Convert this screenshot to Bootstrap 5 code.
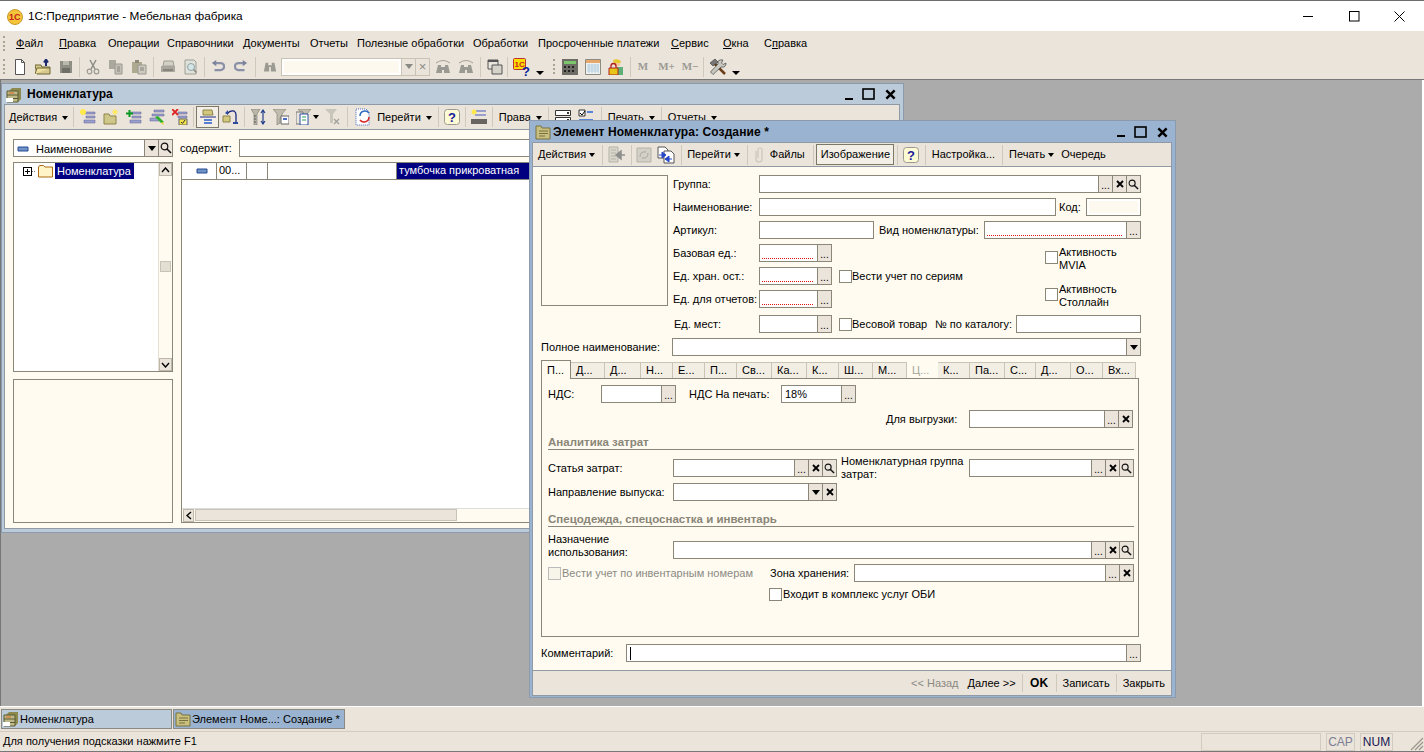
<!doctype html>
<html lang="ru"><head><meta charset="utf-8"><title>1C</title>
<link href="https://cdn.jsdelivr.net/npm/bootstrap@5.3.0/dist/css/bootstrap.min.css" rel="stylesheet">
<style>
html,body{height:752px;overflow:hidden}
body{font:11px/13px "Liberation Sans",Arial,sans-serif;color:#000;background:#ababab}
.root{height:752px;width:1424px}
.ttl{height:31px;background:#fff;border-top:1px solid #6d6d6d;font-size:11.8px;padding:1px 0 0 7px}
.ttl>svg{margin-right:5px}
.wb{width:45.5px;height:30px}
.wbs{margin-right:1.5px}
.mbar{height:23px;background:#ebe4da;padding:2px 0 0 3px}
.gr{width:2px;height:15px;border-left:2px dotted #a9a394;flex-shrink:0}
.mgr{margin-right:11px}
.tbar{height:26px;background:#ebe4da;padding-left:3px;border-bottom:1px solid #777}
.tgr{margin-right:3px}
.tgr2{margin:0 3px 0 7px}
.desk{flex:1;background:#ababab;position:relative;overflow:hidden;border-left:1px solid #777;border-right:2px solid #fff}
.win{position:absolute;border:1px solid #8b9aac;display:flex;flex-direction:column}
.win1{left:0;top:3px;width:903px;height:450px;background:#bccbda}
.win2{left:528px;top:40px;width:647px;height:578px;background:#9ab3d0}
.wh{height:20px;padding:1px 2px 0 4px;font-weight:700;font-size:12px}
.win2 .wh{height:21px;padding-left:5px;letter-spacing:.1px}
.wh>svg:first-child{margin-right:5px}
.win2 .wh>svg:first-child{margin-right:2px}
.wctl{margin-left:auto;margin-right:1px}
.wctl svg{display:block}
.g5{margin-right:5px}.g6{margin-right:6px}
.wbody{flex:1;margin:0 3px 3px 2px;border:1px solid #8f9aa6;background:#fffbf0;display:flex;flex-direction:column;min-height:0}
.win2 .wbody{margin:0 3px 1px 2px}
.itb{height:25px;background:#ebe4da;border-bottom:1px solid #8f9aa6;padding-left:1px;flex-shrink:0;white-space:nowrap;overflow:hidden}
.itb2{height:24px;padding-left:2px}
.tbi{width:23px;height:22px;display:flex;align-items:center;justify-content:center;flex-shrink:0}
.s16{width:16px}.s18{width:18px}.s20{width:20px}.s21{width:21px}.s22{width:22px}.s26{width:26px}
.s25{width:25px;justify-content:flex-end;padding-right:3px}
.tbs{height:20px;width:1px;background:#cfc9bc;margin:0 3px;flex-shrink:0}
.tn{margin:0 2px}
.tbar .tbs{margin:0 1px 0 2px}
.tbar .ta{margin:0 2px 0 3px}
.tbar .tb{margin:0 2px 0 1px}
.tbt{padding:0 3px;flex-shrink:0}
.tl2{padding-left:2px}
.tr5{padding-right:5px}
.tr4{padding-right:4px}
.tneg{margin-left:-3px}
.act{border:1px solid #7c7868;height:22px;background:#f3efe7}
.izo{width:78px;margin-left:-1px;padding:0 0 0 4px;height:21px}
.caret-d{display:inline-block;border:3px solid transparent;border-top:4px solid #000;border-bottom:0;margin:0 1px 0 3px;vertical-align:middle}
.win1 .caret-d{margin:0 0 0 5px}
.win1 .cfl{margin:0 3px 0 -2px;flex-shrink:0}
.dis{color:#8a8a84}
.inp,.fb{height:18px;border:1px solid #8a8678;background:#fff}
.inp{flex:1;min-width:0;padding:2px 3px 0;line-height:13px;white-space:nowrap;overflow:hidden}
.req{background:repeating-linear-gradient(90deg,#d11 0 1px,#fff 1px 2px) 2px 13px/calc(100% - 6px) 1px no-repeat #fff}
.fb{width:15px;margin-left:-1px;background:#ebe4da;display:flex;align-items:center;justify-content:center;flex-shrink:0;font-size:10px;line-height:10px}
.fld{display:flex;height:18px;flex-shrink:0}
.dots{position:relative;top:2px}
.caret-b{border:4px solid transparent;border-top:5px solid #000;border-bottom:0;display:block}
.caret-g{border:4px solid transparent;border-top:5px solid #8a8a84;border-bottom:0;display:block}
.combo{width:149px}
.combo .inp{background:#fdf9ee;box-shadow:inset 0 0 0 2px #fff;border-color:#c8c3b5}
.combo .fb{border-color:#c8c3b5;font-size:13px;color:#8a8a84}
.kod{background:#fdf9ee;box-shadow:inset 0 0 0 2px #fff}
.arw{width:13px;height:22px;display:flex;align-items:flex-end;justify-content:center;padding-bottom:3px;flex-shrink:0}
.arw::before{content:"";border:4px solid transparent;border-top:4px solid #000;border-bottom:0}
.mm{font:700 11px/13px "Liberation Serif",serif;color:#9a9a94;text-align:center;flex-shrink:0}
.m1{width:20px}.m2{width:27px}
.rw{display:flex;align-items:center;height:18px;flex-shrink:0}
.rw>span{flex-shrink:0}
.nw{white-space:nowrap}
.mb5x{margin-bottom:5px}.mb7x{margin-bottom:7px}
.chk{width:13px;height:13px;border:1px solid #8a8678;background:#fff;flex-shrink:0}
.chk.off{background:#f7f4ea;border-color:#bbb}
.pic{width:127px;height:131px;border:1px solid #8a8678;margin-right:5px;flex-shrink:0}
.w14{width:14px}.w21{width:21px}.w27{width:27px}.w30{width:30px}.w31{width:31px}.w32{width:32px}.w33{width:33px}.w34{width:34px}.w35{width:35px}.w36{width:36px}.w41{width:41px}.w43{width:43px}.w47{width:47px}.w49{width:49px}.w52{width:52px}.w53{width:53px}.w55{width:55px}.w59{width:59px}.w65{width:65px}.w67{width:67px}.w73{width:73px}.w75{width:75px}.w76{width:76px}.w81{width:81px}.w83{width:83px}.w84{width:84px}.w85{width:85px}.w86{width:86px}.w92{width:92px}.w96{width:96px}.w105{width:105px}.w115{width:115px}.w116{width:116px}.w125{width:125px}.w128{width:128px}.w129{width:129px}.w131{width:131px}.w133{width:133px}.w157{width:157px}.w160{width:160px}.w164{width:164px}.w165{width:165px}.w208{width:208px}.w221{width:221px}.w280{width:280px}.w297{width:297px}.w372{width:372px}.w382{width:382px}.w461{width:461px}.w469{width:469px}.w515{width:515px}
.ms1x{margin-left:1px}.ms2x{margin-left:2px}.ms3x{margin-left:3px}.ms4x{margin-left:4px}.ms5x{margin-left:5px}.ms7x{margin-left:7px}.ms8x{margin-left:8px}.ms13x{margin-left:13px}
.mt3x{margin-top:3px}.mt5x{margin-top:5px}.mt6x{margin-top:6px}.mt7x{margin-top:7px}.mt9x{margin-top:9px}.mt14x{margin-top:14px}
.pe1x{padding-right:1px}
.fpad{padding:8px 8px 0 8px;flex:1;min-height:0;display:flex;flex-direction:column}
.ftop{display:flex;margin-bottom:5px}
.fcol{width:468px}
.racts{padding-top:2px}
.act2{height:37px}
.act3{height:25px}
.chkit{display:flex;align-items:flex-start}
.chkit .chk{margin:5px 1px 0 0}
.tabs1c{height:18px;margin-top:4px;border:0;flex-wrap:nowrap;gap:0;position:relative;z-index:1;align-items:flex-start;flex-shrink:0}
.tabs1c .nav-link{font-size:11px;line-height:13px;padding:1px 0 0 5px;height:16px;margin:2px 0 0;color:#000;background:#f3eee4;border:1px solid #c9c4b6;border-width:1px 1px 0 0;border-radius:0;white-space:nowrap;overflow:hidden}
.tabs1c .nav-link.active{background:#fffbf0;height:19px;margin-top:0;padding:3px 0 0 5px;border:1px solid #8a8678;border-bottom:0}
.tabs1c .nav-link.disabled{color:#a4a49c}
.tabbody{width:598px;height:259px;border:1px solid #8a8678;padding:6px 4px 0 6px;flex-shrink:0}
.hd{font-weight:700;color:#8a8678;border-bottom:1px solid #8a8678;height:15px;line-height:14px;font-size:11.5px}
.hd1{margin-top:7px}.hd2{margin-top:11px}
.up{align-self:flex-end}
.crt{display:inline-block;width:1px;height:13px;background:#000}
.wfoot{height:25px;background:#ebe4da;border-top:1px solid #8f9aa6;flex-shrink:0;padding-right:6px}
.fs{width:1px;height:18px;background:#cfc9bc;margin:0 6px}
.nz{margin-right:9px}
.ok{font-weight:700;font-size:12px;margin:0 1.5px}
.filt{padding:9px 0 0 8px}
.bx{height:18px;border:1px solid #8a8678;background:#fff}
.ft{margin-left:7px}
.px8{padding-left:8px}
.lpane{width:160px;flex-shrink:0}
.tree{height:210px;border:1px solid #8a8678;background:#fff;position:relative;display:flex}
.treeb{height:16px}
.tpm{margin:0 1px 0 9px}
.sel1{background:#000080;color:#fff}
.tsel{padding:1px 3px 1px 2px;height:16px;margin-left:2px;line-height:14px}
.sbv{width:14px;border-left:1px solid #e4dfd3;background:#fffbf0;display:flex;flex-direction:column;justify-content:space-between;position:relative}
.sbb{height:13px;background:#ebe4da;border:1px solid #bdb8aa;display:flex;align-items:center;justify-content:center;flex-shrink:0}
.hbtn{width:11px;margin-left:1px}
.thumb{position:absolute;left:1px;top:98px;width:11px;height:11px;background:#e4dfd3;border:1px solid #c8c3b5}
.lower{height:144px;border:1px solid #8a8678;background:#fffbf0;margin-top:7px}
.grid{flex:1;border:1px solid #8a8678;background:#fff;margin-left:8px;display:flex;flex-direction:column;height:361px}
.grow{height:17px;border-bottom:1px solid #8a8678;display:flex}
.gc{border-right:1px solid #8a8678;height:16px;padding:1px 0 0 2px;flex-shrink:0;white-space:nowrap}
.gsel{flex:1;border:0}
.gspace{flex:1}
.hsb{height:14px;background:#fffbf0;border-top:1px solid #ddd;display:flex;padding:0}
.hthumb{width:262px;height:12px;background:#ebe4da;border:1px solid #c8c3b5;margin-left:1px}
.tasks{height:25px;background:#ebe4da;border-top:1px solid #fff;padding:2px 0 0 1px;flex-shrink:0}
.tk{height:20px;padding:0 0 0 1px;border:1px solid #8a8a84;display:flex;align-items:center;flex-shrink:0}
.tk1{width:171px;background:#bccbda}
.tk2{width:172px;background:#9ab3d0;margin-left:1px}
.stat{height:21px;background:#ebe4da;border-top:1px solid #d2ccc0;border-bottom:1px solid #777;padding:0 0 0 3px;flex-shrink:0}
.sbx{height:18px;border:1px solid #d2ccc0;text-align:center;line-height:16px;font-size:12px;flex-shrink:0}
.sb0{width:120px}.sb1{width:29px;color:#7b7f96;margin-left:5px}.sb2{width:33px;margin:0 17px 0 5px;color:#141450}
.grip{align-self:flex-end}
</style></head><body>
<svg width="0" height="0" class="d-none"><defs>
<symbol id="i-new" viewBox="0 0 16 16"><path d="M3.500.5h6l3 3v12h-9z" fill="#fff" stroke="#555"/><path d="M9.500.5v3h3" fill="none" stroke="#555"/></symbol>
<symbol id="i-open" viewBox="0 0 16 16"><path d="M0 6h6l1 2h8v7H2z" fill="#d7c98d" stroke="#6e6433"/><path d="M0 15l2-6h13" fill="#eee0a0" stroke="#6e6433"/><path d="M11 7V2M9 3.500l2-3 2 3" fill="none" stroke="#1c2a6e" stroke-width="2"/></symbol>
<symbol id="i-save" viewBox="0 0 16 16"><path d="M2 2h12v12H2z" fill="#8f8f86"/><path d="M5 2h6v4H5z" fill="#b9b9ae"/><path d="M4 9h8v5H4z" fill="#6f6f68"/></symbol>
<symbol id="i-cut" viewBox="0 0 16 16"><path d="M5 1l5 9M11 1l-5 9" stroke="#8c8c86" stroke-width="1.500" fill="none"/><circle cx="4.500" cy="12.500" r="2.300" fill="none" stroke="#9a9a94" stroke-width="1.200"/><circle cx="11.500" cy="12.500" r="2.300" fill="none" stroke="#9a9a94" stroke-width="1.200"/></symbol>
<symbol id="i-copy" viewBox="0 0 16 16"><path d="M1 1h7v9H1z" fill="#aaa89e"/><path d="M7 5h7v10H7z" fill="#c4c2b8" stroke="#9a988e"/><path d="M9 8h3M9 10h3M9 12h3" stroke="#84827a"/></symbol>
<symbol id="i-paste" viewBox="0 0 16 16"><path d="M1 3h10v11H1z" fill="#aeaa92"/><path d="M4 1h4v3H4z" fill="#8d8a78"/><path d="M7 6h8v9H7z" fill="#cdcbc1" stroke="#9a988e"/><path d="M9 9h4M9 11h4" stroke="#84827a"/></symbol>
<symbol id="i-print" viewBox="0 0 16 16"><path d="M4 2h9l1 5H3z" fill="#d3d1c7" stroke="#a09e94"/><path d="M1 7h14v6H1z" fill="#a9a79d"/><path d="M3 10h10v2H3z" fill="#86847b"/></symbol>
<symbol id="i-prev" viewBox="0 0 16 16"><path d="M2 1h9l2 2v12H2z" fill="#dfe3dc" stroke="#a09e94"/><circle cx="8" cy="8" r="3.500" fill="#d5e6e6" stroke="#94a2a2"/><path d="M10.500 10.500l3 3" stroke="#8a8a82" stroke-width="1.500"/></symbol>
<symbol id="i-undo" viewBox="0 0 16 16"><path d="M5 3.500H11a3.500 3.500 0 0 1 0 8H4" fill="none" stroke="#8a90a8" stroke-width="2.500"/><path d="M1 3.500L6 0v7z" fill="#7d839c"/></symbol>
<symbol id="i-redo" viewBox="0 0 16 16"><path d="M11 3.500H5a3.500 3.500 0 0 0 0 8h7" fill="none" stroke="#8a90a8" stroke-width="2.500"/><path d="M15 3.500L10 0v7z" fill="#7d839c"/></symbol>
<symbol id="i-bin" viewBox="0 0 16 16"><path d="M3 3h3v3h4V3h3l2 10H9V8H7v5H1z" fill="#9a9a92"/></symbol>
<symbol id="i-bin2" viewBox="0 0 16 16"><path d="M3 6h3v2h4V6h3l2 8H9v-3H7v3H1z" fill="#9a9a92"/><path d="M1 4q7-5 14 0" fill="none" stroke="#a0a09a"/></symbol>
<symbol id="i-wins" viewBox="0 0 16 16"><path d="M1 1h10v9H1z" fill="#e8e6dc" stroke="#555"/><path d="M1 1h10v2H1z" fill="#555"/><path d="M5 6h10v9H5z" fill="#d5d3c9" stroke="#555"/></symbol>
<symbol id="i-1c" viewBox="0 0 18 18"><rect x=".5" y=".5" width="12" height="11" rx="1" fill="#ffdf00" stroke="#b33"/><text x="1.500" y="9" font-size="8" font-weight="700" fill="#c22" font-family="Liberation Sans">1С</text><text x="9" y="17.500" font-size="13" font-weight="700" fill="#0a1f9c" font-family="Liberation Sans">?</text></symbol>
<symbol id="i-calc" viewBox="0 0 16 16"><path d="M0 0h16v16H0z" fill="#6d6d66"/><path d="M2 2h12v3H2z" fill="#7bc86c"/><path d="M2 7h2v2H2zM6 7h2v2H6zM10 7h2v2h-2zM2 11h2v2H2zM6 11h2v2H6zM10 11h2v2h-2z" fill="#222"/></symbol>
<symbol id="i-cal" viewBox="0 0 16 16"><path d="M.5.500h15v15H.5z" fill="#eef3f1" stroke="#8c8c80"/><path d="M1 1h14v3H1z" fill="#e8a76a"/><path d="M2 6h12M2 8h12M2 10h12M2 12h12M4 5v9M7 5v9M10 5v9M13 5v9" stroke="#9ec0d8" stroke-width=".6"/></symbol>
<symbol id="i-lock" viewBox="0 0 16 16"><circle cx="9" cy="4" r="3.500" fill="#f2c89c"/><path d="M5 1q4-2 8 1l-1 2H6z" fill="#e6c830"/><path d="M9 8h6v8H9z" fill="#5db07a"/><path d="M1 9h9v7H1z" fill="#e6c418" stroke="#b02020"/><path d="M3 9V7a2.500 2.500 0 0 1 5 0v2" fill="none" stroke="#b02020" stroke-width="1.300"/></symbol>
<symbol id="i-tools" viewBox="0 0 18 18"><path d="M4 4l12 12" stroke="#6b3d18" stroke-width="2.500"/><path d="M1 5l5-4 3 3-5 4z" fill="#777" stroke="#333" stroke-width=".6"/><path d="M14 2l-1.500 3 1.500 1.500 3-1.500q0 5-5 4L4 16.500 1.500 14 9 6q-1-5 5-4z" fill="#c8c8c0" stroke="#444" stroke-width=".7"/></symbol>
<symbol id="i-n1" viewBox="0 0 16 16"><path d="M5 3h10v2H5zM6 7h9v2H6zM4 11h11v3H4z" fill="#9aa0cc" stroke="#5d6294" stroke-width=".5"/><circle cx="3" cy="3" r="3" fill="#ffe94d"/></symbol>
<symbol id="i-n2" viewBox="0 0 16 16"><path d="M1 5h5l1 2h6v8H1z" fill="#cfc78a" stroke="#8d8448"/><path d="M12 0v6M9 3h6M10 1l4 4M14 1l-4 4" stroke="#ffe94d"/></symbol>
<symbol id="i-n3" viewBox="0 0 16 16"><path d="M5 3h10v2H5zM6 7h9v2H6zM4 11h11v3H4z" fill="#9aa0cc" stroke="#5d6294" stroke-width=".5"/><path d="M0 4.500h7M3.500 1v7" stroke="#0a9a22" stroke-width="2"/></symbol>
<symbol id="i-n4" viewBox="0 0 16 16"><path d="M5 1h10v2H5zM3 5h12v2H3zM1 9h9v3H1z" fill="#9aa0cc" stroke="#5d6294" stroke-width=".5"/><path d="M6 8l6 6 3-1-6-6z" fill="#2fb02f"/><path d="M12 14l3 2-1-3z" fill="#e8d020"/></symbol>
<symbol id="i-n5" viewBox="0 0 16 16"><path d="M6 3h9v2H6zM6 7h9v2H6z" fill="#9aa0cc" stroke="#5d6294" stroke-width=".5"/><path d="M0 0l6 6M6 0L0 6" stroke="#d22" stroke-width="1.800"/><path d="M7 10h8v6H7z" fill="#f2e24a" stroke="#666"/><path d="M9 13l1.500 1.500L13 11" stroke="#333" fill="none"/></symbol>
<symbol id="i-n6" viewBox="0 0 16 16"><path d="M3 1h9l1 5H3z" fill="#d2c880" stroke="#8d8448"/><path d="M0 8h16" stroke="#1a2a80"/><path d="M4 10h8v2H4zM4 13h8v2H4z" fill="#5a7fd0"/></symbol>
<symbol id="i-n7" viewBox="0 0 16 16"><path d="M1 7h7v6H1z" fill="#d2c880" stroke="#8d8448"/><path d="M5 5q3-4 7-3 2 1 2 4v8" fill="none" stroke="#1a2a80" stroke-width="1.300"/><path d="M3 4l3-3v5zM11 13h5v2h-5z" fill="#2d4a9c"/></symbol>
<symbol id="i-f1" viewBox="0 0 16 16"><path d="M0 0h9L6 5v11H3V5z" fill="#bbb8aa" stroke="#77756a" stroke-width=".6"/><path d="M3 7h2M3 10h2M3 13h2" stroke="#555"/><path d="M12 2v12M10 12l2 3 2-3M10 4l2-3 2 3" fill="none" stroke="#24408e" stroke-width="1.200"/></symbol>
<symbol id="i-f2" viewBox="0 0 16 16"><path d="M0 0h13L9 5v4H7v5L4 16V5z" fill="#c0bdaf" stroke="#77756a" stroke-width=".6"/><path d="M8 7h8v8H8z" fill="#fff" stroke="#666"/><path d="M10 9h4v2h-4z" fill="#4c6cc0"/></symbol>
<symbol id="i-f3" viewBox="0 0 16 16"><path d="M2 0h13l-4 5v3H6V5z" fill="#c0bdaf" stroke="#77756a" stroke-width=".6"/><path d="M0 3h7v12H0z" fill="#e8e6dc" stroke="#777"/><path d="M4 5h8v11H4z" fill="#fff" stroke="#2d4a9c"/><path d="M6 8h4M6 11h4" stroke="#2d9a5c"/></symbol>
<symbol id="i-f4" viewBox="0 0 16 16"><path d="M0 0h12L8 5v9H5V5z" fill="#c8c6ba"/><path d="M9 10l5 5M14 10l-5 5" stroke="#a0a09a" stroke-width="1.300"/></symbol>
<symbol id="i-ref" viewBox="0 0 18 18"><path d="M1 1h10l3 3v13H1z" fill="#fff" stroke="#4a6ac0" stroke-dasharray="1 1"/><path d="M5 8a5 5 0 0 1 9-3" fill="none" stroke="#2d6ac0" stroke-width="1.500"/><path d="M14 9a5 5 0 0 1-9 3" fill="none" stroke="#d22" stroke-width="1.500"/></symbol>
<symbol id="i-q" viewBox="0 0 16 16"><rect x=".5" y=".5" width="15" height="15" rx="3" fill="#fdfbd4" stroke="#9a9a90"/><text x="8" y="13" text-anchor="middle" font-size="13" font-weight="700" fill="#1a1a9c" font-family="Liberation Sans">?</text></symbol>
<symbol id="i-bc" viewBox="0 0 16 16"><path d="M4 1h11v2H4zM4 5h11v2H4z" fill="#9aa0cc"/><circle cx="3" cy="3" r="2.500" fill="#ffe94d"/><path d="M1 10v5M3 10v5M5 10v5M7 10v5M9 10v5M11 10v5M13 10v5M15 10v5" stroke="#111" stroke-width="1.200"/></symbol>
<symbol id="i-rows" viewBox="0 0 16 16"><path d="M.5 1.500h15v5H.5zM.5 8.500h15v5H.5z" fill="#fff" stroke="#333"/><path d="M12 3h2v2h-2zM12 10h2v2h-2z" fill="#333"/></symbol>
<symbol id="i-chk" viewBox="0 0 16 16"><path d="M1 1h6v6H1z" fill="#fff" stroke="#333"/><path d="M2 4l2 2 3-4" stroke="#000" fill="none"/><path d="M9 2h6v2H9zM1 10h14v2H1z" fill="#5a84d8"/></symbol>
<symbol id="i-cab" viewBox="0 0 16 16"><path d="M3 4l3-3h9v11l-3 3z" fill="#8d8a50"/><path d="M1 4h11v11H1z" fill="#bdb98a" stroke="#5d5a30"/><path d="M1 8h11M1 11.500h11" stroke="#5d5a30"/><path d="M0 11h7v4H0z" fill="#fff"/><path d="M3 6h5" stroke="#e2691e"/></symbol>
<symbol id="i-fold" viewBox="0 0 16 16"><path d="M1 4V2h5l1 2h8v11H1z" fill="#c9c07f" stroke="#787140"/><path d="M4 7h9M4 9.500h9M4 12h6" stroke="#787140"/></symbol>
<symbol id="i-mag" viewBox="0 0 12 12"><circle cx="4.500" cy="4.500" r="3.300" fill="none" stroke="#111" stroke-width="1.200"/><path d="M7 7l4 4" stroke="#111" stroke-width="1.600"/></symbol>
<symbol id="i-x" viewBox="0 0 8 8"><path d="M1 1l6 6M7 1L1 7" stroke="#000" stroke-width="1.800"/></symbol>
<symbol id="i-mn" viewBox="0 0 12 12"><path d="M1 4h10v4H1z" fill="#6f93c8" stroke="#274a90"/></symbol>
<symbol id="i-w2a" viewBox="0 0 18 18"><path d="M1 1h9v15H1z" fill="#d8d6cc" stroke="#b5b3a8"/><path d="M3 4h5M3 7h5M3 10h5M3 13h5" stroke="#b5b3a8"/><path d="M17 9H10M13 5L8 9l5 4z" fill="#8e8e8c" stroke="#8e8e8c" stroke-width="1.500"/></symbol>
<symbol id="i-w2b" viewBox="0 0 16 16"><path d="M1 1h14v14H1z" fill="#d3d1c7" stroke="#b5b3a8"/><path d="M4 10q0-6 6-5M12 6q0 6-6 5" stroke="#a8a69c" fill="none"/></symbol>
<symbol id="i-w2c" viewBox="0 0 18 18"><path d="M1 1h7l3 3v8H1z" fill="#fff" stroke="#555"/><path d="M7 5h7l3 3v9H7z" fill="#fff" stroke="#555"/><path d="M2 9h6M5 6l4 3-4 3zM15 13H9M12 10l-4 3 4 3z" fill="#2646c8" stroke="#2646c8"/></symbol>
<symbol id="i-clip" viewBox="0 0 16 16"><path d="M5 4v8a3 3 0 0 0 6 0V3a2 2 0 0 0-4 0v8" fill="none" stroke="#c9c6ba" stroke-width="1.200"/></symbol>
<symbol id="i-minw" viewBox="0 0 12 12"><path d="M0 10h8" stroke="#000" stroke-width="2"/></symbol>
</defs></svg>

<div class="root d-flex flex-column">
<header class="ttl d-flex align-items-center flex-shrink-0">
<svg width="16" height="16" viewBox="0 0 16 16"><circle cx="8" cy="8" r="7.500" fill="#f4c53a" stroke="#c89a2a"/><text x="2" y="11" font-size="9" font-weight="700" fill="#c4201a" font-family="Liberation Sans">1С</text></svg>
<span>1С:Предприятие - Мебельная фабрика</span>
<div class="ms-auto d-flex wbs">
<div class="wb d-flex align-items-center justify-content-center"><svg width="11" height="11"><path d="M0 5.500h10" stroke="#000"/></svg></div>
<div class="wb d-flex align-items-center justify-content-center"><svg width="11" height="11"><rect x=".5" y=".5" width="9.500" height="9.500" fill="none" stroke="#000"/></svg></div>
<div class="wb d-flex align-items-center justify-content-center"><svg width="11" height="11"><path d="M.5.500l10 10M10.500.500l-10 10" stroke="#000"/></svg></div>
</div></header>

<nav class="mbar d-flex align-items-center flex-shrink-0">
<span class="gr mgr"></span>
<span class="w43"><u>Ф</u>айл</span><span class="w49"><u>П</u>равка</span><span class="w59">Операции</span><span class="w76">Справочники</span><span class="w67">Документы</span><span class="w47">Отчеты</span><span class="w116">Полезные обработки</span><span class="w65">Обработки</span><span class="w133">Просроченные платежи</span><span class="w52"><u>С</u>ервис</span><span class="w41"><u>О</u>кна</span><span>С<u>п</u>равка</span>
</nav>

<div class="tbar d-flex align-items-center flex-shrink-0">
<span class="gr tgr"></span>
<span class="tbi"><svg width="16" height="16"><use href="#i-new"/></svg></span><span class="tbi"><svg width="16" height="16"><use href="#i-open"/></svg></span><span class="tbi"><svg width="16" height="16"><use href="#i-save"/></svg></span><span class="tbs"></span>
<span class="tbi"><svg width="16" height="16"><use href="#i-cut"/></svg></span><span class="tbi"><svg width="16" height="16"><use href="#i-copy"/></svg></span><span class="tbi"><svg width="16" height="16"><use href="#i-paste"/></svg></span><span class="tbs ta"></span>
<span class="tbi"><svg width="16" height="16"><use href="#i-print"/></svg></span><span class="tbi"><svg width="16" height="16"><use href="#i-prev"/></svg></span><span class="tbs"></span>
<span class="tbi"><svg width="14" height="14"><use href="#i-undo"/></svg></span><span class="tbi"><svg width="14" height="14"><use href="#i-redo"/></svg></span><span class="tbs ta"></span>
<span class="tbi"><svg width="14" height="14"><use href="#i-bin"/></svg></span>
<div class="fld combo"><span class="inp"></span><span class="fb"><span class="caret-g"></span></span><span class="fb">×</span></div>
<span class="tbi ms1x"><svg width="16" height="16"><use href="#i-bin2"/></svg></span><span class="tbi"><svg width="16" height="16"><use href="#i-bin2"/></svg></span><span class="tbs ta"></span>
<span class="tbi"><svg width="16" height="16"><use href="#i-wins"/></svg></span><span class="tbs tb"></span>
<span class="tbi"><svg width="18" height="18"><use href="#i-1c"/></svg></span><span class="arw"></span>
<span class="gr tgr2"></span>
<span class="tbi"><svg width="16" height="16"><use href="#i-calc"/></svg></span><span class="tbi"><svg width="16" height="16"><use href="#i-cal"/></svg></span><span class="tbi"><svg width="16" height="16"><use href="#i-lock"/></svg></span><span class="tbs ta"></span>
<span class="mm m1">M</span><span class="mm m2">M+</span><span class="mm m1">M−</span><span class="tbs ta"></span>
<span class="tbi"><svg width="18" height="18"><use href="#i-tools"/></svg></span><span class="arw"></span>
</div>

<main class="desk">
<section class="win win1">
<div class="wh d-flex align-items-center flex-shrink-0"><svg width="16" height="16"><use href="#i-cab"/></svg><span>Номенклатура</span>
<div class="wctl d-flex align-items-center"><svg class="g5" width="12" height="12"><use href="#i-minw"/></svg><svg class="g6" width="13" height="13"><rect x="1" y="1" width="11" height="10" fill="none" stroke="#000" stroke-width="1.600"/></svg><svg class="mx-1" width="11" height="11" viewBox="0 0 8 8"><use href="#i-x"/></svg></div></div>
<div class="wbody">
<div class="itb d-flex align-items-center">
<span class="tbt">Действия<i class="caret-d"></i></span><span class="tbs tn"></span>
<span class="tbi"><svg width="16" height="16"><use href="#i-n1"/></svg></span><span class="tbi"><svg width="16" height="16"><use href="#i-n2"/></svg></span><span class="tbi"><svg width="16" height="16"><use href="#i-n3"/></svg></span><span class="tbi"><svg width="16" height="16"><use href="#i-n4"/></svg></span><span class="tbi"><svg width="16" height="16"><use href="#i-n5"/></svg></span><span class="tbs tn"></span>
<span class="tbi act"><svg width="16" height="16"><use href="#i-n6"/></svg></span><span class="tbi s22"><svg width="16" height="16"><use href="#i-n7"/></svg></span><span class="tbs"></span>
<span class="tbi s21"><svg width="16" height="16"><use href="#i-f1"/></svg></span><span class="tbi"><svg width="16" height="16"><use href="#i-f2"/></svg></span><span class="tbi"><svg width="16" height="16"><use href="#i-f3"/></svg></span><i class="caret-d cfl"></i><span class="tbi s22"><svg width="16" height="16"><use href="#i-f4"/></svg></span><span class="tbs"></span>
<span class="tbi s26"><svg width="18" height="18"><use href="#i-ref"/></svg></span><span class="tbt tneg">Перейти<i class="caret-d"></i></span><span class="tbs"></span>
<span class="tbi s20"><svg width="16" height="16"><use href="#i-q"/></svg></span><span class="tbs"></span><span class="tbi s20"><svg width="16" height="16"><use href="#i-bc"/></svg></span><span class="tbs"></span>
<span class="tbt">Права<i class="caret-d"></i></span><span class="tbs"></span><span class="tbi"><svg width="16" height="16"><use href="#i-rows"/></svg></span><span class="tbi"><svg width="16" height="16"><use href="#i-chk"/></svg></span><span class="tbs"></span>
<span class="tbt">Печать<i class="caret-d"></i></span><span class="tbs"></span><span class="tbt">Отчеты<i class="caret-d"></i></span>
</div>
<div class="filt d-flex align-items-center">
<div class="fld w160"><span class="inp d-flex align-items-center"><svg width="12" height="12"><use href="#i-mn"/></svg><span class="ft">Наименование</span></span><span class="fb"><span class="caret-b"></span></span><span class="fb"><svg width="12" height="12"><use href="#i-mag"/></svg></span></div>
<span class="ms7x w59">содержит:</span><div class="bx flex-grow-1"></div>
</div>
<div class="d-flex px8 mt5x">
<div class="lpane">
<div class="tree"><div class="treeb flex-grow-1 d-flex align-items-center"><svg class="tpm" width="14" height="13" viewBox="0 0 14 13"><rect x=".5" y="2.500" width="8" height="8" fill="#fff" stroke="#000"/><path d="M2 6.500h5M4.500 4v5" stroke="#000"/><path d="M9 6.500h4" stroke="#777" stroke-dasharray="1 1"/></svg><svg width="15" height="13" viewBox="0 0 15 13"><path d="M.5 12V2l1-1.500h4L7 2h7.500v10z" fill="#fff4c8" stroke="#b06a10"/></svg><span class="sel1 tsel">Номенклатура</span></div>
<div class="sbv"><span class="sbb"><svg width="9" height="6"><path d="M1 5l3.500-4L8 5" fill="none" stroke="#000" stroke-width="1.400"/></svg></span><span class="thumb"></span><span class="sbb"><svg width="9" height="6"><path d="M1 1l3.500 4L8 1" fill="none" stroke="#000" stroke-width="1.400"/></svg></span></div></div>
<div class="lower"></div>
</div>
<div class="grid">
<div class="grow"><span class="gc w35 text-end pe-2"><svg width="12" height="12"><use href="#i-mn"/></svg></span><span class="gc w30">00...</span><span class="gc w21"></span><span class="gc w129"></span><span class="gc sel1 gsel">тумбочка прикроватная</span></div>
<div class="gspace"></div>
<div class="hsb"><span class="sbb hbtn"><svg width="6" height="9"><path d="M5 1L1 4.500 5 8" fill="none" stroke="#000" stroke-width="1.400"/></svg></span><span class="hthumb"></span></div>
</div>
</div>
</div>
</section>

<section class="win win2">
<div class="wh d-flex align-items-center flex-shrink-0"><svg width="16" height="16"><use href="#i-fold"/></svg><span>Элемент Номенклатура: Создание *</span>
<div class="wctl d-flex align-items-center"><svg class="g5" width="12" height="12"><use href="#i-minw"/></svg><svg class="g6" width="13" height="13"><rect x="1" y="1" width="11" height="10" fill="none" stroke="#000" stroke-width="1.600"/></svg><svg class="mx-1" width="11" height="11" viewBox="0 0 8 8"><use href="#i-x"/></svg></div></div>
<div class="wbody">
<div class="itb itb2 d-flex align-items-center">
<span class="tbt">Действия<i class="caret-d"></i></span><span class="tbs"></span>
<span class="tbi s22"><svg width="18" height="18"><use href="#i-w2a"/></svg></span><span class="tbs"></span><span class="tbi s18"><svg width="16" height="16"><use href="#i-w2b"/></svg></span><span class="tbi s25"><svg width="18" height="18"><use href="#i-w2c"/></svg></span><span class="tbs"></span>
<span class="tbt tl2">Перейти<i class="caret-d"></i></span><span class="tbs"></span>
<span class="tbi s16"><svg width="16" height="16"><use href="#i-clip"/></svg></span><span class="tbt tr5">Файлы</span><span class="tbs"></span>
<span class="tbt act izo d-flex align-items-center">Изображение</span><span class="tbs"></span>
<span class="tbi s21"><svg width="16" height="16"><use href="#i-q"/></svg></span><span class="tbs"></span>
<span class="tbt tr4">Настройка...</span><span class="tbs"></span><span class="tbt">Печать<i class="caret-d"></i></span><span class="tbt">Очередь</span>
</div>
<div class="fpad">
<div class="ftop">
<div class="pic"></div>
<div class="fcol">
<div class="rw mb5x"><span class="w86">Группа:</span><div class="fld w382"><span class="inp"></span><span class="fb"><span class="dots">...</span></span><span class="fb"><svg width="8" height="8"><use href="#i-x"/></svg></span><span class="fb"><svg width="11" height="11"><use href="#i-mag"/></svg></span></div></div>
<div class="rw mb5x"><span class="w86">Наименование:</span><div class="fld w297"><span class="inp"></span></div><span class="ms3x w27">Код:</span><div class="fld w55"><span class="inp kod"></span></div></div>
<div class="rw mb5x"><span class="w86">Артикул:</span><div class="fld w115"><span class="inp"></span></div><span class="ms5x w105">Вид номенклатуры:</span><div class="fld w157"><span class="inp req"></span><span class="fb"><span class="dots">...</span></span></div></div>
<div class="d-flex">
<div class="w372">
<div class="rw mb5x"><span class="w86">Базовая ед.:</span><div class="fld w73"><span class="inp req"></span><span class="fb"><span class="dots">...</span></span></div></div>
<div class="rw mb5x"><span class="w86">Ед. хран. ост.:</span><div class="fld w73"><span class="inp req"></span><span class="fb"><span class="dots">...</span></span></div><span class="chk ms7x"></span><span class="nw">Вести учет по сериям</span></div>
<div class="rw mb7x"><span class="w86">Ед. для отчетов:</span><div class="fld w73"><span class="inp req"></span><span class="fb"><span class="dots">...</span></span></div></div>
</div>
<div class="w96 racts">
<div class="chkit act2"><span class="chk"></span><span>Активность<br>MVIA</span></div>
<div class="chkit act3"><span class="chk"></span><span>Активность<br>Столлайн</span></div>
</div>
</div>
<div class="rw"><span class="w85 ms1x">Ед. мест:</span><div class="fld w73"><span class="inp"></span><span class="fb"><span class="dots">...</span></span></div><span class="chk ms7x"></span><span class="nw w75">Весовой товар</span><span class="ms8x w81">№ по каталогу:</span><div class="fld w125"><span class="inp"></span></div></div>
</div>
</div>
<div class="rw"><span class="w131">Полное наименование:</span><div class="fld w469"><span class="inp"></span><span class="fb"><span class="caret-b"></span></span></div></div>
<ul class="nav nav-tabs tabs1c">
<li class="nav-item"><a class="nav-link active w30">П...</a></li><li class="nav-item"><a class="nav-link w34">Д...</a></li><li class="nav-item"><a class="nav-link w36">Д...</a></li><li class="nav-item"><a class="nav-link w32">Н...</a></li><li class="nav-item"><a class="nav-link w32">Е...</a></li><li class="nav-item"><a class="nav-link w32">П...</a></li><li class="nav-item"><a class="nav-link w35">Св...</a></li><li class="nav-item"><a class="nav-link w35">Ка...</a></li><li class="nav-item"><a class="nav-link w32">К...</a></li><li class="nav-item"><a class="nav-link w34">Ш...</a></li><li class="nav-item"><a class="nav-link w34">М...</a></li><li class="nav-item"><a class="nav-link disabled w31">Ц...</a></li><li class="nav-item"><a class="nav-link w32">К...</a></li><li class="nav-item"><a class="nav-link w35">Па...</a></li><li class="nav-item"><a class="nav-link w31">С...</a></li><li class="nav-item"><a class="nav-link w35">Д...</a></li><li class="nav-item"><a class="nav-link w32">О...</a></li><li class="nav-item"><a class="nav-link w33">Вх...</a></li>
</ul>
<div class="tabbody">
<div class="rw"><span class="w53">НДС:</span><div class="fld w75"><span class="inp"></span><span class="fb"><span class="dots">...</span></span></div><span class="ms13x w92">НДС На печать:</span><div class="fld w75"><span class="inp">18%</span><span class="fb"><span class="dots">...</span></span></div></div>
<div class="rw mt7x justify-content-end pe1x"><span class="w83">Для выгрузки:</span><div class="fld w164"><span class="inp"></span><span class="fb"><span class="dots">...</span></span><span class="fb"><svg width="8" height="8"><use href="#i-x"/></svg></span></div></div>
<div class="hd hd1">Аналитика затрат</div>
<div class="rw mt9x"><span class="w125">Статья затрат:</span><div class="fld w164"><span class="inp"></span><span class="fb"><span class="dots">...</span></span><span class="fb"><svg width="8" height="8"><use href="#i-x"/></svg></span><span class="fb"><svg width="11" height="11"><use href="#i-mag"/></svg></span></div><span class="ms4x w128">Номенклатурная группа затрат:</span><div class="fld w165"><span class="inp"></span><span class="fb"><span class="dots">...</span></span><span class="fb"><svg width="8" height="8"><use href="#i-x"/></svg></span><span class="fb"><svg width="11" height="11"><use href="#i-mag"/></svg></span></div></div>
<div class="rw mt6x"><span class="w125">Направление выпуска:</span><div class="fld w164"><span class="inp"></span><span class="fb"><span class="caret-b"></span></span><span class="fb"><svg width="8" height="8"><use href="#i-x"/></svg></span></div></div>
<div class="hd hd2">Спецодежда, спецоснастка и инвентарь</div>
<div class="rw mt14x"><span class="w125 up">Назначение<br>использования:</span><div class="fld w461"><span class="inp"></span><span class="fb"><span class="dots">...</span></span><span class="fb"><svg width="8" height="8"><use href="#i-x"/></svg></span><span class="fb"><svg width="11" height="11"><use href="#i-mag"/></svg></span></div></div>
<div class="rw mt5x"><span class="chk off"></span><span class="dis w208 ms1x">Вести учет по инвентарным номерам</span><span class="w84">Зона хранения:</span><div class="fld w280"><span class="inp"></span><span class="fb"><span class="dots">...</span></span><span class="fb"><svg width="8" height="8"><use href="#i-x"/></svg></span></div></div>
<div class="rw mt3x"><span class="w221"></span><span class="chk"></span><span class="ms1x">Входит в комплекс услуг ОБИ</span></div>
</div>
<div class="rw mt7x"><span class="w85">Комментарий:</span><div class="fld w515"><span class="inp"><span class="crt"></span></span><span class="fb"><span class="dots">...</span></span></div></div>
</div>
<div class="wfoot d-flex align-items-center justify-content-end mt-auto">
<span class="dis nz">&lt;&lt; Назад</span><span>Далее &gt;&gt;</span><span class="fs"></span><span class="ok">OK</span><span class="fs"></span><span>Записать</span><span class="fs"></span><span>Закрыть</span>
</div>
</div>
</section>
</main>

<div class="tasks d-flex">
<div class="tk tk1"><svg width="16" height="16"><use href="#i-cab"/></svg><span class="ms1x">Номенклатура</span></div>
<div class="tk tk2"><svg width="16" height="16"><use href="#i-fold"/></svg><span class="ms1x">Элемент Номе...: Создание *</span></div>
</div>
<footer class="stat d-flex align-items-center"><span class="me-auto">Для получения подсказки нажмите F1</span><span class="sbx sb0"></span><span class="sbx sb1">CAP</span><span class="sbx sb2">NUM</span><svg class="grip" width="14" height="14"><path d="M13 1L1 13M13 5l-8 8M13 9l-4 4" stroke="#9a958a" stroke-width="1.200"/></svg></footer>
</div>
<script src="https://cdn.jsdelivr.net/npm/bootstrap@5.3.0/dist/js/bootstrap.bundle.min.js"></script>
</body></html>
